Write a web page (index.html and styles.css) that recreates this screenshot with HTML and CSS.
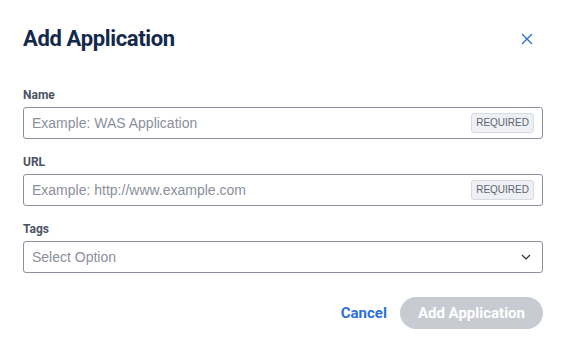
FILE: index.html
```html
<!DOCTYPE html>
<html lang="en">
<head>
  <meta charset="UTF-8">
  <meta name="viewport" content="width=device-width, initial-scale=1.0">
  <title>Add Application</title>
  <link rel="stylesheet" href="styles.css">
</head>
<body>
  <div class="dialog">
    <div class="dialog-header">
      <h1>Add Application</h1>
      <button class="close-btn" aria-label="Close">
        <svg width="12" height="12" viewBox="0 0 12 12"><path d="M1 1L11 11M11 1L1 11" stroke="#2d6fe0" stroke-width="1.4" fill="none"/></svg>
      </button>
    </div>
    <form class="dialog-body">
      <div class="field">
        <label for="appName">Name</label>
        <div class="input-wrap">
          <input type="text" id="appName" placeholder="Example: WAS Application">
          <span class="badge">REQUIRED</span>
        </div>
      </div>
      <div class="field">
        <label for="appUrl">URL</label>
        <div class="input-wrap">
          <input type="text" id="appUrl" placeholder="Example: http://www.example.com">
          <span class="badge">REQUIRED</span>
        </div>
      </div>
      <div class="field">
        <label for="appTags">Tags</label>
        <div class="input-wrap select-wrap">
          <span class="select-text" id="appTags">Select Option</span>
          <svg class="chevron" width="10" height="6" viewBox="0 0 10 6"><path d="M1 1L5 5L9 1" stroke="#2b2f38" stroke-width="1.2" fill="none"/></svg>
        </div>
      </div>
    </form>
    <div class="dialog-footer">
      <button class="btn-link" type="button">Cancel</button>
      <button class="btn-primary" type="button" disabled>Add Application</button>
    </div>
  </div>
</body>
</html>
```
FILE: styles.css
```css
body {
  margin: 0;
  background: #fff;
  font-family: Roboto, "Liberation Sans", sans-serif;
}
.dialog {
  width: 566px;
  height: 352px;
  box-sizing: border-box;
  padding: 24px 23px 0 23px;
  background: #fff;
}
.dialog-header {
  display: flex;
  justify-content: space-between;
  align-items: center;
  height: 30px;
}
h1 {
  margin: 0;
  font-size: 22px;
  font-weight: 700;
  color: #14284b;
  letter-spacing: -0.35px;
  line-height: 28px;
}
.close-btn {
  border: 0;
  background: none;
  padding: 0;
  margin-right: 10px;
  width: 12px;
  height: 12px;
  display: flex;
  cursor: pointer;
}
.dialog-body {
  margin-top: 34px;
  display: flex;
  flex-direction: column;
  gap: 16px;
}
.field {
  display: flex;
  flex-direction: column;
}
label {
  font-size: 12px;
  font-weight: 700;
  color: #4b5263;
  line-height: 14px;
  margin-bottom: 5px;
}
.input-wrap {
  display: flex;
  align-items: center;
  height: 32px;
  box-sizing: border-box;
  border: 1px solid #8c91a0;
  border-radius: 3px;
  padding: 0 8px;
}
.input-wrap input {
  flex: 1;
  border: 0;
  outline: none;
  padding: 0;
  font-family: "Liberation Sans", Arial, sans-serif;
  font-size: 14px;
  color: #2b2f38;
  background: transparent;
}
.input-wrap input::placeholder {
  color: #8a8f9b;
}
.badge {
  font-family: "Liberation Sans", Arial, sans-serif;
  font-size: 10px;
  color: #5d6371;
  background: #eef0f3;
  border: 1px solid #d7dae0;
  border-radius: 3px;
  padding: 3px 4px;
  line-height: 12px;
}
.select-wrap {
  justify-content: space-between;
  padding-right: 11px;
}
.select-text {
  font-family: "Liberation Sans", Arial, sans-serif;
  font-size: 14px;
  color: #8a8f9b;
}
.dialog-footer {
  display: flex;
  justify-content: flex-end;
  align-items: center;
  gap: 13px;
  margin-top: 24px;
}
.btn-link {
  border: 0;
  background: none;
  padding: 0;
  font-family: Roboto, "Liberation Sans", sans-serif;
  font-size: 15px;
  font-weight: 700;
  color: #2a6fdb;
  cursor: pointer;
}
.btn-primary {
  border: 0;
  height: 32px;
  padding: 0 18px;
  border-radius: 16px;
  background: #c8cbd1;
  color: #fff;
  font-family: Roboto, "Liberation Sans", sans-serif;
  font-size: 15px;
  font-weight: 700;
}
```
